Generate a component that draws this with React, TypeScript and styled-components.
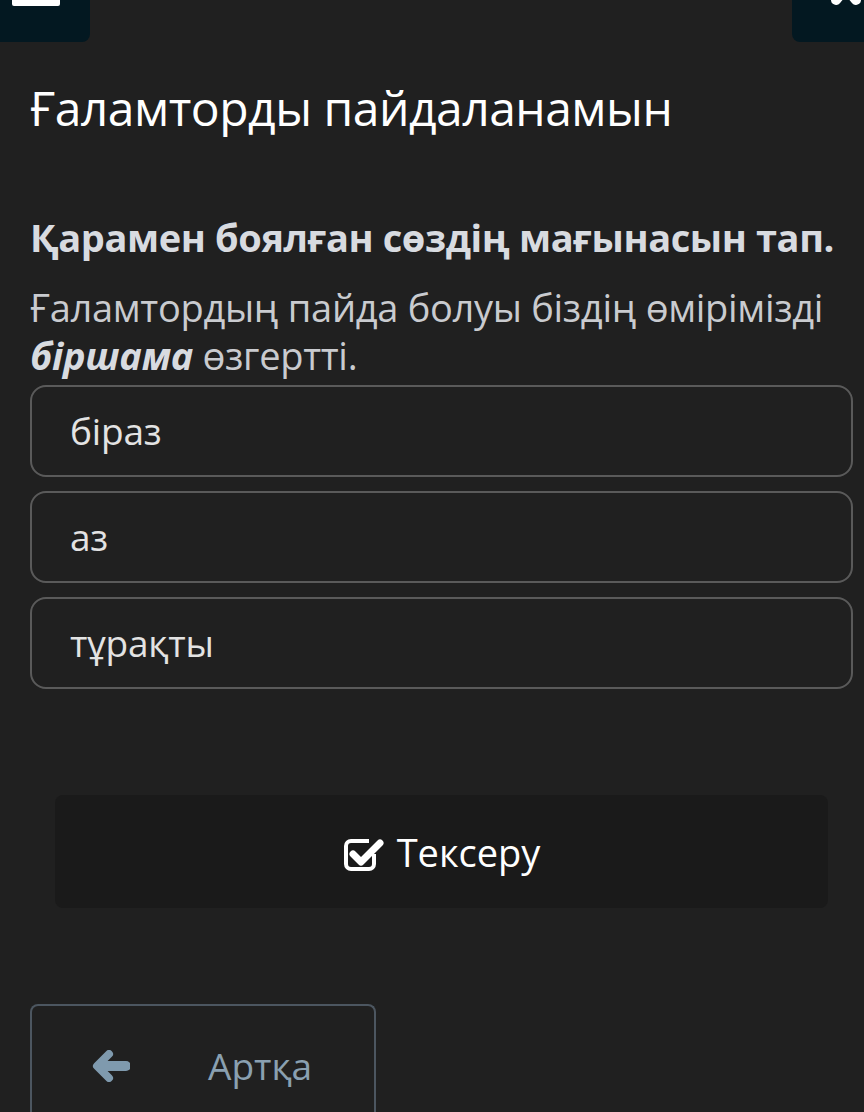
import React from "react";
import styled, { createGlobalStyle } from "styled-components";

const Global = createGlobalStyle`
  html, body { margin: 0; padding: 0; background: #202020; }
  body { font-family: "Open Sans", "Noto Sans", sans-serif; }
  #root { min-height: 1112px; }
`;

const Page = styled.div`
  width: 864px;
  height: 1112px;
  overflow: hidden;
  background: #202020;
  display: flex;
  flex-direction: column;
  & > * { flex-shrink: 0; }
`;

const TopBar = styled.div`
  display: flex;
  justify-content: space-between;
  height: 42px;
`;

const NavButton = styled.div<{ $side: "left" | "right" }>`
  position: relative;
  width: ${(p) => (p.$side === "left" ? "90px" : "72px")};
  height: 42px;
  background: #031821;
  border-radius: ${(p) => (p.$side === "left" ? "0 0 8px 0" : "0 0 0 8px")};
  overflow: hidden;
`;

const MenuBar = styled.div`
  position: absolute;
  left: 12px;
  top: -4px;
  width: 48px;
  height: 10px;
  border-radius: 2px;
  background: #ffffff;
`;

const CloseIcon = styled.svg`
  position: absolute;
  left: 32px;
  top: -30px;
`;

const Title = styled.h1`
  margin: 38px 0 0 30px;
  font-weight: 400;
  font-size: 48px;
  line-height: 56px;
  color: #ffffff;
  letter-spacing: -0.5px;
`;

const Content = styled.div`
  padding: 0 30px;
  display: flex;
  flex-direction: column;
`;

const Question = styled.div`
  margin-top: 77px;
  font-weight: 700;
  font-size: 38px;
  line-height: 48px;
  color: #d8dbe0;
  letter-spacing: -0.4px;
  white-space: nowrap;
`;

const Sentence = styled.div`
  margin-top: 22px;
  font-size: 38px;
  line-height: 48px;
  color: #c9cbcf;
  letter-spacing: -0.3px;
  b {
    font-style: italic;
    font-weight: 700;
    color: #d8dbe0;
  }
`;

const Options = styled.div`
  margin-top: 6px;
  display: flex;
  flex-direction: column;
  gap: 14px;
`;

const Option = styled.div`
  width: 823px;
  height: 92px;
  box-sizing: border-box;
  border: 2px solid #5a5a5a;
  border-radius: 16px;
  display: flex;
  align-items: center;
  padding: 0 0 2px 38px;
  font-size: 37px;
  color: #e3e3e3;
  letter-spacing: -0.2px;
`;

const CheckButton = styled.div`
  margin: 106px 0 0 55px;
  width: 773px;
  height: 113px;
  border-radius: 8px;
  background: #1a1a1a;
  display: flex;
  align-items: center;
  justify-content: center;
  gap: 12px;
  color: #ffffff;
  font-size: 38px;
  box-sizing: border-box;
`;

const CheckIcon = styled.svg`
  margin-top: 4px;
`;

const BackButton = styled.div`
  margin: 96px 0 0 30px;
  width: 346px;
  height: 130px;
  border: 2px solid #4c5660;
  border-bottom: none;
  border-radius: 8px 8px 0 0;
  box-sizing: border-box;
  display: flex;
  align-items: flex-start;
  padding-top: 34px;
  color: #8aa0b1;
  font-size: 37px;
`;

const BackArrow = styled.svg`
  margin: 10px 0 0 60px;
`;

const BackLabel = styled.span`
  margin-left: 78px;
`;

export default function App() {
  return (
    <Page>
      <Global />
      <TopBar>
        <NavButton $side="left">
          <MenuBar />
        </NavButton>
        <NavButton $side="right">
          <CloseIcon width="44" height="38" viewBox="0 0 44 38">
            <path
              d="M12 6 L22 18 L32 6 M12 30 L22 18 L32 30"
              stroke="#fff"
              strokeWidth="10"
              strokeLinecap="round"
              fill="none"
            />
          </CloseIcon>
        </NavButton>
      </TopBar>
      <Title>Ғаламторды пайдаланамын</Title>
      <Content>
        <Question>Қарамен боялған сөздің мағынасын тап.</Question>
        <Sentence>
          Ғаламтордың пайда болуы біздің өмірімізді <b>біршама</b> өзгертті.
        </Sentence>
        <Options>
          <Option>біраз</Option>
          <Option>аз</Option>
          <Option>тұрақты</Option>
        </Options>
      </Content>
      <CheckButton>
        <CheckIcon width="42" height="38" viewBox="0 0 42 38">
          <path
            d="M31 19 V29 A5 5 0 0 1 26 34 H8 A5 5 0 0 1 3 29 V11 A5 5 0 0 1 8 6 H26"
            fill="none"
            stroke="#fff"
            strokeWidth="4"
          />
          <path d="M10 19 L18 27 L37 8" stroke="#fff" strokeWidth="7" strokeLinecap="round" strokeLinejoin="round" fill="none" />
        </CheckIcon>
        <span>Тексеру</span>
      </CheckButton>
      <BackButton>
        <BackArrow width="38" height="32" viewBox="0 0 38 32">
          <path d="M17 4 L5 16 L17 28" stroke="#7f9aae" strokeWidth="8" strokeLinecap="round" strokeLinejoin="round" fill="none" />
          <path d="M8 16 L34 16" stroke="#7f9aae" strokeWidth="10" strokeLinecap="round" fill="none" />
        </BackArrow>
        <BackLabel>Артқа</BackLabel>
      </BackButton>
    </Page>
  );
}
